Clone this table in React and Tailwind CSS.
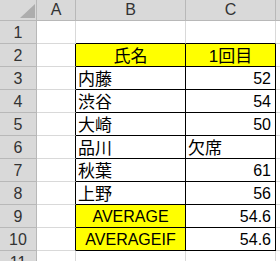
import React from "react";

const rows = [
  { n: 1 },
  { n: 2, b: "氏名", c: "1回目", head: true },
  { n: 3, b: "内藤", c: "52" },
  { n: 4, b: "渋谷", c: "54" },
  { n: 5, b: "大崎", c: "50" },
  { n: 6, b: "品川", c: "欠席", textC: true },
  { n: 7, b: "秋葉", c: "61" },
  { n: 8, b: "上野", c: "56" },
  { n: 9, b: "AVERAGE", c: "54.6", avg: true },
  { n: 10, b: "AVERAGEIF", c: "54.6", avg: true },
  { n: 11 },
];

function HeaderRow() {
  return (
    <div className="flex h-[21px] bg-[#d9d9d9] text-[16px] text-[#333]">
      <div className="relative w-[37px] shrink-0 border-r border-b border-[#b8b8b8]">
        <svg className="absolute left-[20px] top-[4px]" width="15" height="15" viewBox="0 0 15 15">
          <polygon points="0,14 15,14 15,0" fill="#adadad" />
        </svg>
      </div>
      <div className="flex w-[39px] shrink-0 items-center justify-center border-r border-b border-[#b8b8b8]">A</div>
      <div className="flex w-[110px] shrink-0 items-center justify-center border-r border-b border-[#b8b8b8]">B</div>
      <div className="flex w-[90px] shrink-0 items-center justify-center border-r border-b border-[#b8b8b8]">C</div>
      <div className="flex-1 border-b border-[#b8b8b8]" />
    </div>
  );
}

function Row({ r }) {
  const inTable = r.n >= 2 && r.n <= 10;
  const grid = "border-[#d9d9d9]";
  return (
    <div className="flex h-[23px]">
      <div className="flex w-[37px] shrink-0 items-center justify-center border-r border-b border-[#b8b8b8] bg-[#d9d9d9] pt-[1px] text-[16px] leading-none text-[#333]">
        {r.n}
      </div>
      <div className={`w-[39px] shrink-0 border-b ${grid} border-r ${inTable ? "border-r-black" : ""}`} />
      <div
        className={`flex w-[110px] shrink-0 items-end border-r border-b ${
          inTable || r.n === 1 ? "border-black" : grid
        } ${r.n === 1 ? "border-r-[#d9d9d9]" : ""} ${
          r.head || r.avg ? "justify-center bg-[#ffff00]" : "pl-[2px]"
        } ${r.avg ? "pb-[2px] text-[16px]" : "pb-[1px] text-[17px]"} leading-none text-black`}
      >
        {r.b}
      </div>
      <div
        className={`flex w-[90px] shrink-0 items-end border-r border-b ${
          inTable || r.n === 1 ? "border-black" : grid
        } ${r.n === 1 ? "border-r-[#d9d9d9]" : ""} ${
          r.head ? "justify-center bg-[#ffff00] pb-[1px] text-[17px]" : r.textC ? "pl-[2px] pb-[1px] text-[17px]" : "justify-end pr-[4px] pb-[2px] text-[16px]"
        } leading-none text-black`}
      >
        {r.c}
      </div>
      <div className={`flex-1 border-b ${grid}`} />
    </div>
  );
}

export default function App() {
  return (
    <div className="h-[261px] w-[280px] overflow-hidden bg-white font-['Liberation_Sans','Noto_Sans_CJK_JP',sans-serif]">
      <HeaderRow />
      {rows.map((r) => (
        <Row key={r.n} r={r} />
      ))}
    </div>
  );
}
